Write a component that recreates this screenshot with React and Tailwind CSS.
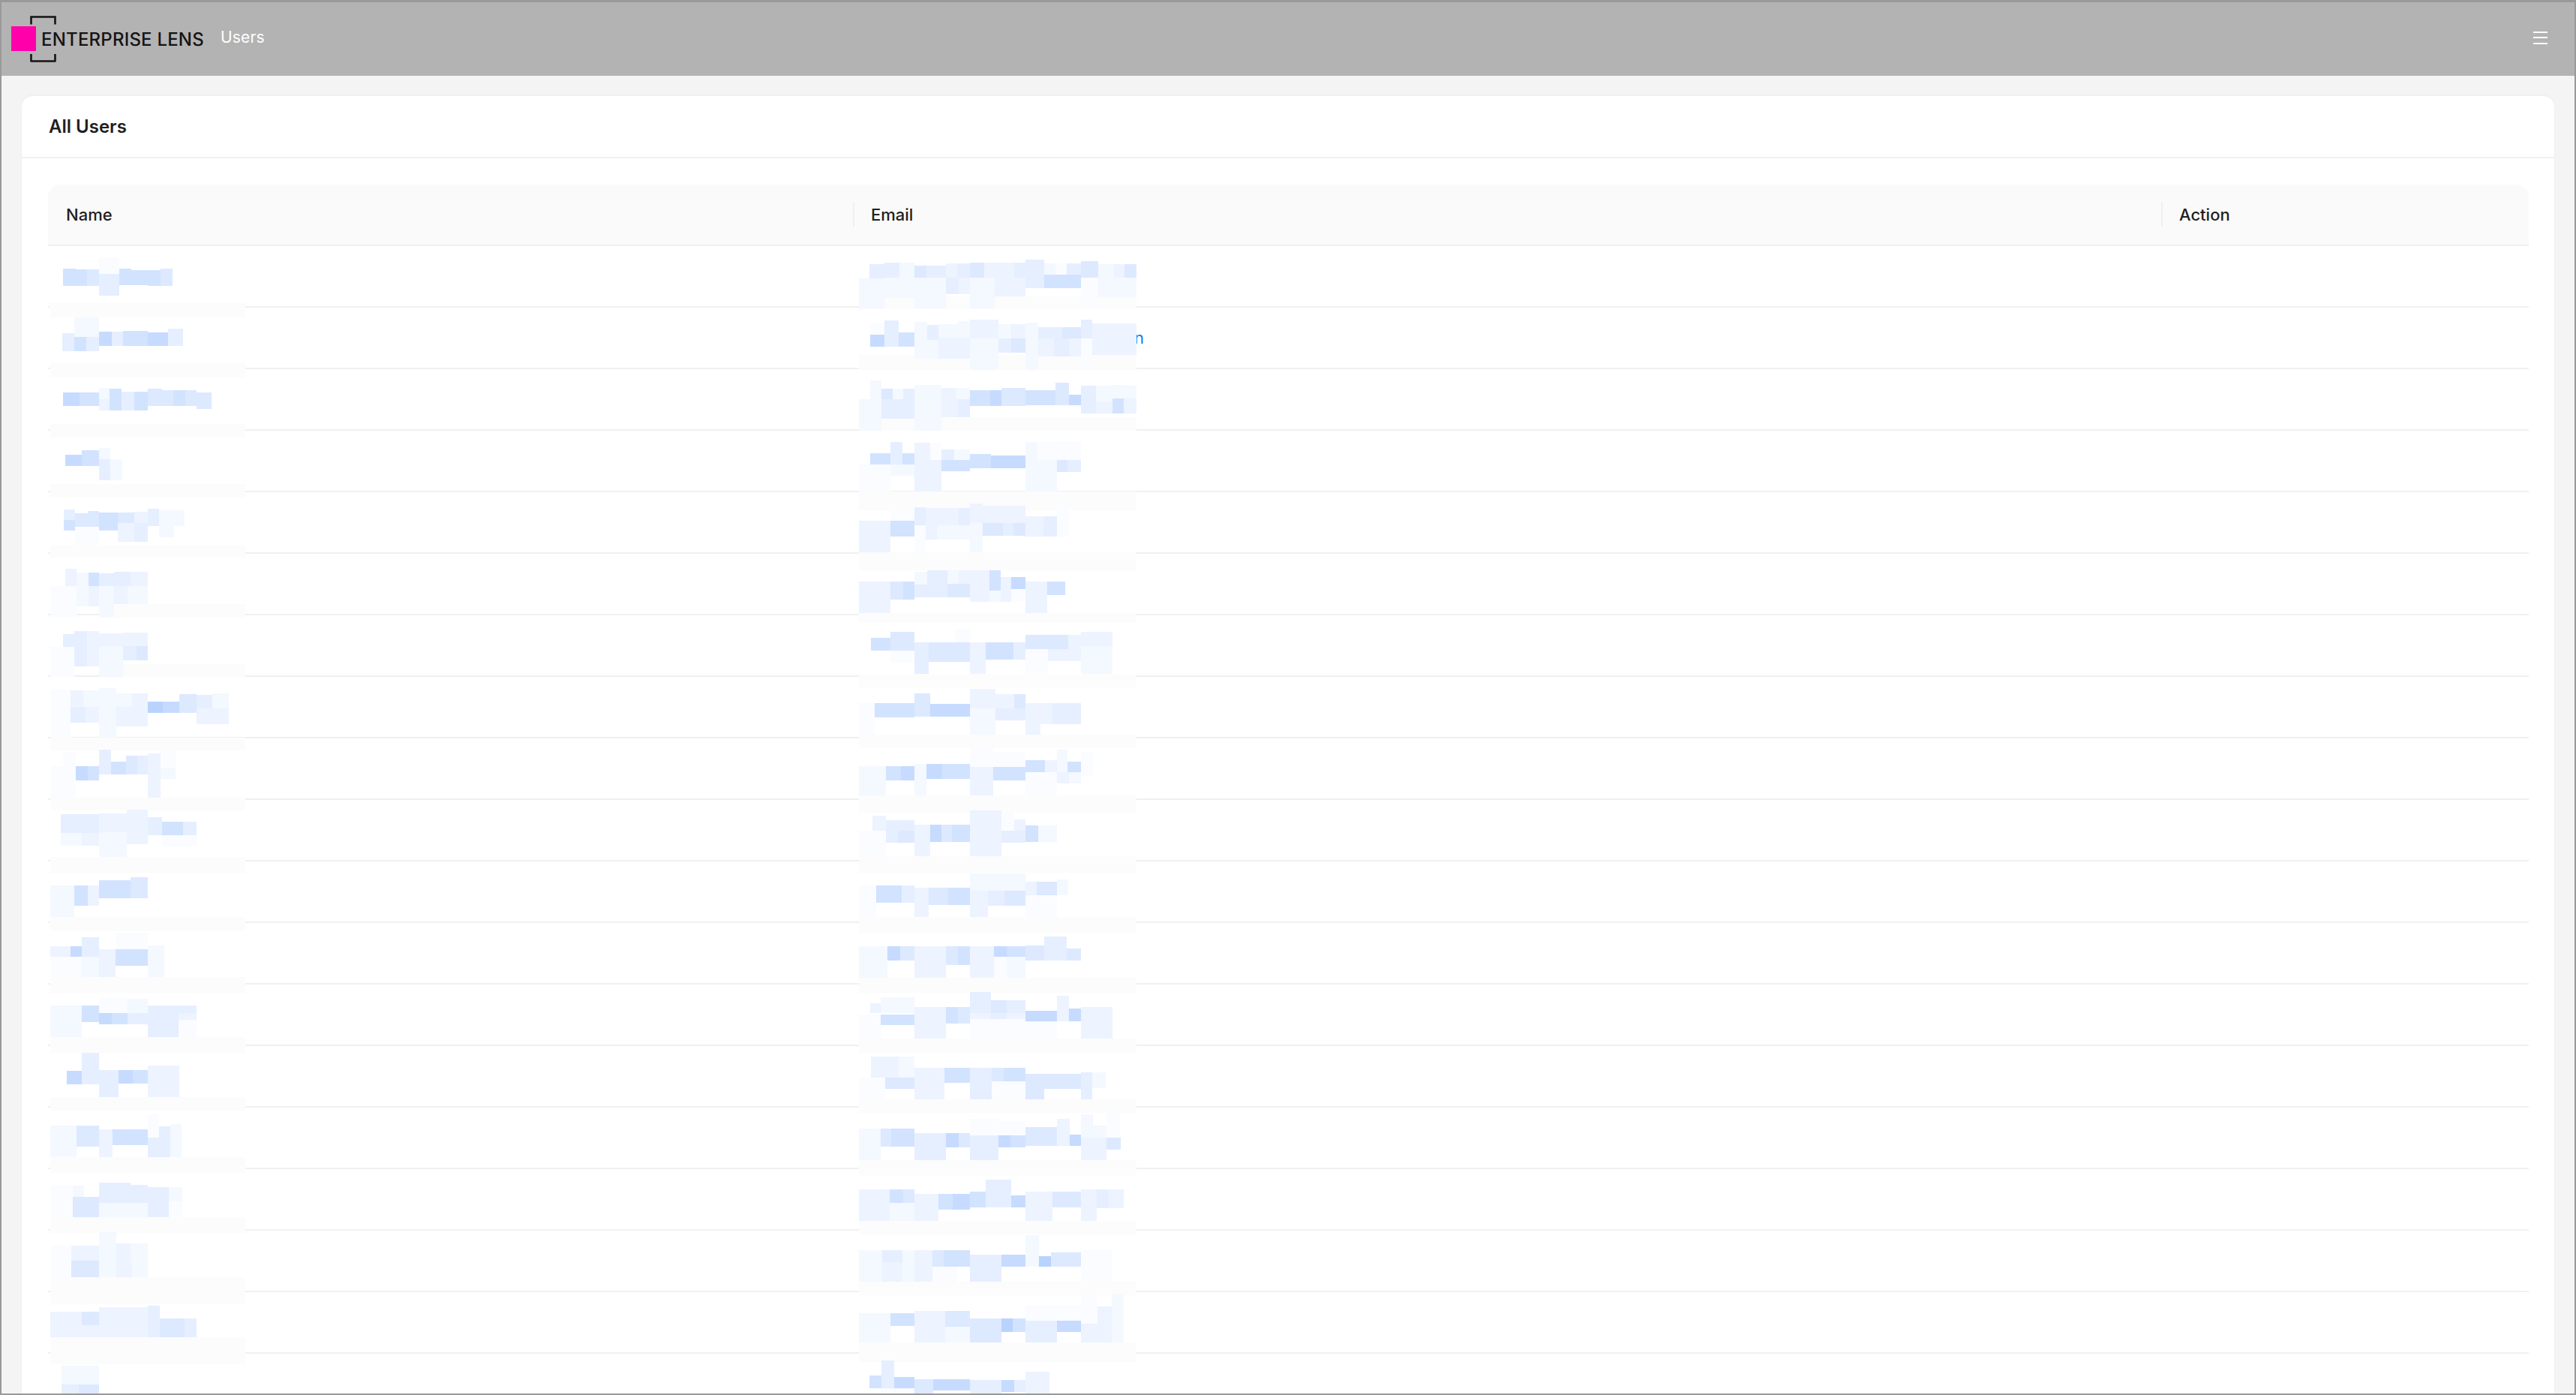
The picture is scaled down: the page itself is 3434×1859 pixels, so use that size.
const palette = {
  0: '#b9d3ff',
  1: '#c6dbff',
  2: '#d2e3ff',
  3: '#dde9ff',
  4: '#e6efff',
  5: '#edf3ff',
  6: '#f4f8ff',
  7: '#fafcff',
  v: '#fcfcfc',
};

// the redacted names and emails: x0 y0 x1 y1 shade, one crop of the column per entry
const nameMosaic = [
  {
    x: 40,
    y: 330,
    blocks: `81 222 861 280 v,81 460 861 520 v,81 705 861 760 v,81 945 861 1000 v,81 1190 861 1240 v,336 1425 861 1480 v,
      132 84 183 153 2,183 87 228 153 2,228 87 276 153 3,276 39 357 105 7,276 105 357 192 4,357 84 405 150 2,405 90 471 150 2,471 90 522 153 2,522 84 570 153 3,
      129 342 177 414 4,177 279 276 357 6,177 357 225 414 2,225 357 276 414 4,276 336 327 393 1,327 336 372 393 4,372 333 471 393 2,471 339 552 393 1,552 324 612 393 4,
      132 579 198 633 1,198 579 276 633 2,276 561 318 606 6,276 606 318 651 5,318 564 366 606 2,318 606 366 651 2,366 576 417 651 4,417 576 471 651 2,471 564 528 633 3,528 570 573 633 3,573 570 621 633 2,621 570 666 633 3,666 579 726 645 3,
      141 828 207 873 1,207 810 276 873 2,276 801 321 846 6,276 846 321 930 4,321 846 369 930 6,
      135 1047 180 1089 4,135 1089 180 1131 2,180 1062 231 1116 3,231 1053 276 1116 3,180 1116 276 1191 7,276 1059 351 1131 2,351 1059 417 1101 3,417 1056 471 1101 5,351 1101 417 1176 5,417 1101 471 1176 4,471 1044 516 1113 4,516 1050 618 1113 6,516 1113 576 1158 6,
      141 1284 186 1353 5,186 1299 234 1353 6,234 1299 276 1353 2,276 1302 336 1353 4,336 1296 402 1353 4,402 1296 471 1353 5,81 1353 186 1478 7,186 1353 234 1434 6,234 1353 276 1434 5,276 1353 336 1425 6,336 1353 390 1425 5,390 1353 471 1425 6,276 1425 336 1478 6`,
  },
  {
    x: 40,
    y: 830,
    blocks: `372 165 861 218 v,81 459 861 510 v,81 700 861 750 v,81 936 861 1000 v,81 1176 861 1232 v,81 1416 861 1480 v,
      132 45 177 96 4,177 33 228 96 4,228 33 276 96 5,276 42 327 93 5,327 42 372 93 5,372 39 471 93 5,81 96 177 218 7,177 96 228 174 4,228 96 276 174 5,276 93 372 218 6,372 93 426 150 4,426 93 471 150 3,
      81 267 162 335 7,162 270 213 335 5,213 270 276 335 6,276 261 345 459 6,345 282 408 336 6,408 282 471 336 5,345 336 471 414 5,162 336 222 399 4,222 336 276 399 5,81 335 162 459 7,471 315 531 360 0,531 315 597 360 1,597 285 666 360 3,666 288 729 345 4,729 282 795 342 6,666 342 795 405 5,
      133 516 183 573 7,81 573 183 699 7,183 573 231 630 1,231 573 276 630 2,276 507 324 606 4,324 555 384 606 2,384 531 429 606 3,429 531 471 606 4,471 522 522 579 5,471 579 522 699 5,522 507 585 579 7,522 579 582 624 6,
      123 765 276 840 4,123 840 207 891 6,207 840 276 891 5,276 762 387 837 5,387 747 471 837 5,387 837 471 885 5,276 837 387 936 6,471 777 528 849 4,528 795 612 849 2,612 795 666 849 4,528 849 666 894 7,
      81 1050 177 1176 6,177 1050 231 1131 2,231 1050 276 1131 5,276 1029 402 1101 2,402 1017 471 1101 3,
      207 1257 276 1335 4,81 1293 162 1335 5,162 1293 207 1335 1,81 1335 207 1416 7,207 1335 276 1416 6,276 1305 342 1416 5,342 1305 471 1371 2,471 1290 537 1416 6,342 1240 471 1305 7,
      81 1530 207 1560 6,207 1530 276 1560 2,276 1500 390 1560 7,390 1503 471 1560 6,471 1530 666 1560 4`,
  },
  {
    x: 40,
    y: 1350,
    blocks: `81 96 861 160 v,81 336 861 390 v,81 576 861 640 v,81 816 861 880 v,81 1056 861 1165 v,81 1296 861 1405 v,
      81 0 207 96 6,207 0 276 36 2,276 0 327 45 1,327 0 390 45 2,390 0 471 45 4,471 0 594 96 4,594 0 666 27 5,594 27 666 96 7,
      147 231 207 285 1,207 159 276 285 4,276 228 354 336 4,354 228 411 282 1,411 228 471 282 2,471 210 597 336 5,
      81 450 186 575 6,186 450 228 534 3,228 450 276 534 3,276 465 330 576 5,330 465 471 528 2,471 402 516 498 7,516 453 561 498 4,471 498 561 576 4,561 444 606 576 6,
      81 690 171 816 7,171 690 216 735 6,171 735 276 816 3,276 678 402 759 4,402 687 471 759 4,276 759 471 816 6,471 696 555 816 4,555 696 609 753 6,555 753 609 816 7,
      81 930 165 1056 7,165 930 276 990 5,165 990 219 1056 3,219 990 276 1056 3,276 876 345 1056 6,345 921 402 996 5,402 921 471 1002 6,345 996 408 1056 5,408 1002 471 1056 6,
      81 1194 207 1296 5,207 1194 276 1248 3,276 1176 471 1296 5,207 1248 276 1296 5,471 1170 519 1296 4,519 1221 618 1296 3,618 1221 666 1296 4,
      126 1410 276 1485 6,126 1485 195 1521 4,195 1485 276 1521 3`,
  },
];

const emailMosaic = [
  {
    x: 1130,
    y: 330,
    blocks: `45 195 1155 245 v,45 429 1155 489 v,45 680 1155 732 v,45 975 1155 1050 v,45 1218 1155 1290 v,45 1461 1155 1500 v,
      87 66 147 123 4,147 60 207 123 4,207 60 267 123 6,267 72 315 120 3,315 72 393 120 4,393 63 438 120 5,438 63 489 120 4,489 60 546 120 3,546 60 666 120 5,666 60 711 120 4,711 48 786 162 4,786 63 831 108 6,831 63 876 108 7,876 63 933 108 4,933 54 1002 120 3,1002 66 1065 120 6,1065 66 1107 120 5,1107 66 1155 120 3,45 123 147 245 6,147 120 267 200 6,267 120 393 245 6,393 120 444 186 4,444 120 489 186 5,489 120 588 245 6,588 120 711 195 5,786 108 933 162 2,933 120 1002 245 7,1002 120 1155 198 6,
      90 303 147 348 7,90 348 147 396 1,147 291 204 396 4,204 339 267 396 2,267 297 318 444 6,318 309 363 369 4,318 369 363 444 6,363 306 441 360 6,441 294 489 360 6,363 360 489 444 5,489 288 603 363 5,489 363 603 489 6,603 306 654 363 6,654 306 711 363 5,603 363 654 420 4,654 363 711 420 3,711 300 762 489 6,762 318 858 363 4,858 318 933 363 3,762 363 825 435 5,825 363 885 435 4,885 363 933 435 5,933 288 978 363 4,933 363 978 489 7,978 303 1155 363 5,978 363 1155 429 5,
      90 531 135 606 6,135 564 180 606 3,180 564 222 606 6,222 564 267 606 4,267 549 375 606 6,375 561 432 606 5,432 561 489 606 6,489 570 570 633 2,570 570 615 633 1,615 561 711 633 3,711 570 831 630 2,831 540 885 630 3,885 588 933 630 1,933 552 993 663 4,993 552 1059 615 6,1059 549 1104 603 6,1104 552 1155 603 6,1059 603 1104 663 2,1104 603 1155 663 5,993 615 1059 663 5,45 606 135 732 6,135 606 267 684 4,267 606 375 732 6,375 606 441 678 5,441 606 489 678 4,
      90 822 171 867 2,171 777 219 867 4,219 822 267 867 2,267 780 330 849 5,330 780 375 849 7,375 807 426 849 4,426 807 489 849 6,267 849 375 975 5,375 849 432 894 2,432 849 489 894 2,489 825 573 882 2,573 831 711 882 1,711 777 756 849 6,756 777 837 849 7,837 774 888 849 7,888 774 933 849 7,711 849 837 975 6,837 849 879 897 3,879 849 933 897 4,45 867 171 975 7,171 867 216 912 6,216 867 267 912 6,
      171 1050 219 1092 7,219 1050 267 1092 7,267 1038 312 1110 4,312 1041 381 1110 5,381 1041 444 1110 5,444 1041 489 1110 4,489 1023 540 1101 5,540 1032 651 1101 5,651 1032 711 1101 5,45 1092 171 1218 5,171 1092 222 1155 2,222 1092 267 1155 2,267 1110 312 1218 7,312 1110 357 1167 5,357 1110 489 1167 6,489 1101 540 1218 6,540 1101 621 1152 3,621 1101 663 1152 4,663 1101 711 1152 3,711 1074 783 1155 5,783 1074 837 1155 4,837 1026 885 1098 7,837 1098 885 1155 7,
      267 1296 318 1347 6,318 1290 399 1344 4,399 1290 444 1344 6,444 1290 489 1344 5,489 1290 567 1416 5,567 1290 612 1371 2,612 1317 654 1416 5,654 1317 711 1365 1,567 1371 612 1416 6,654 1365 711 1416 7,45 1335 171 1461 5,171 1335 222 1407 3,222 1335 267 1407 2,267 1347 318 1398 4,318 1344 399 1398 4,399 1344 444 1398 3,444 1344 489 1398 3,711 1335 798 1461 5,798 1335 870 1389 2`,
  },
  {
    x: 1130,
    y: 830,
    blocks: `45 205 1155 260 v,45 447 1155 500 v,45 690 1155 760 v,45 933 1155 1000 v,45 1176 1155 1240 v,45 1419 1155 1480 v,
      93 60 171 111 2,171 36 225 111 3,225 36 267 111 3,267 78 324 204 4,324 78 489 156 3,489 78 552 204 5,552 78 663 147 2,663 78 711 147 4,711 48 882 105 3,882 48 933 105 5,933 36 1059 93 5,933 93 1059 204 6,711 105 801 204 7,801 105 933 153 5,171 111 267 159 7,429 24 489 78 7,
      108 321 168 378 2,168 321 216 378 2,216 321 267 378 2,45 321 108 447 7,267 282 330 375 3,330 324 489 375 1,489 264 591 342 5,489 342 591 447 6,591 285 666 342 5,666 285 711 342 3,591 342 654 390 4,654 342 711 390 4,711 321 771 447 5,771 321 819 405 5,819 321 933 405 4,
      45 573 153 690 6,153 573 213 630 2,213 573 267 630 1,267 564 315 690 6,315 564 378 624 1,378 564 429 624 2,429 564 489 624 2,489 576 582 690 5,489 500 582 576 7,582 516 660 576 7,660 516 711 576 7,582 576 660 630 2,660 576 711 630 2,711 549 789 597 2,789 549 837 597 5,837 507 879 597 6,879 555 933 597 2,837 597 885 642 5,885 597 933 642 6,711 597 837 690 7,933 519 984 612 7,
      99 771 153 831 5,153 789 267 831 4,45 831 153 933 7,153 831 201 879 4,201 831 267 879 3,267 807 330 933 5,330 807 375 876 1,375 807 417 876 3,417 807 489 876 2,489 750 615 831 5,615 744 666 831 7,666 786 711 831 5,489 831 615 933 5,615 831 711 879 4,711 810 762 876 2,762 810 837 876 6,
      45 1050 114 1176 7,114 1050 216 1119 2,216 1050 267 1119 4,267 1059 324 1176 5,324 1059 402 1128 3,402 1059 489 1128 2,489 1002 711 1071 6,489 1071 561 1176 5,561 1071 627 1131 4,627 1071 711 1131 3,711 1035 756 1089 5,756 1035 837 1089 3,837 1026 882 1089 6,711 1089 837 1176 7,
      45 1293 159 1419 6,159 1293 210 1350 1,210 1293 267 1350 3,267 1293 393 1419 5,393 1293 441 1368 3,441 1293 489 1368 2,489 1293 585 1419 5,585 1293 636 1335 1,636 1293 711 1335 2,585 1335 636 1419 7,636 1335 711 1419 6,711 1290 786 1350 3,786 1254 876 1350 4,876 1302 933 1350 3,
      90 1521 132 1560 5,132 1497 267 1560 6,267 1536 393 1560 5,393 1536 441 1560 2,441 1536 489 1560 3,489 1476 573 1560 4,573 1509 636 1560 3,636 1509 711 1560 4,711 1551 837 1560 1,837 1491 885 1560 5,885 1542 933 1560 1,933 1536 1059 1560 5`,
  },
  {
    x: 1130,
    y: 1350,
    blocks: `45 102 1155 160 v,45 345 1155 400 v,45 588 1155 650 v,45 831 1155 885 v,45 1074 1155 1130 v,45 1317 1155 1395 v,
      45 6 132 102 7,132 6 267 48 2,267 0 393 102 5,393 0 441 42 2,441 0 489 42 3,489 24 711 102 7,489 0 573 24 5,573 0 636 24 4,636 0 711 24 5,711 0 837 33 1,837 0 885 33 5,885 0 933 33 1,933 0 1059 102 5,711 33 837 102 7,
      93 174 204 258 5,204 174 267 258 6,45 258 150 345 7,150 258 267 303 3,267 219 387 345 5,387 219 489 279 2,489 219 576 345 4,576 219 624 273 3,624 219 711 273 2,576 273 711 345 7,711 243 786 345 3,786 243 864 303 3,864 243 933 303 3,933 237 978 345 4,978 237 1032 300 6,
      45 462 132 588 6,132 462 174 534 3,174 462 267 534 2,267 480 393 588 4,393 480 444 537 1,444 480 489 537 3,489 489 603 588 4,603 489 651 537 1,651 489 711 537 2,711 456 777 531 3,777 456 837 531 3,837 423 888 531 5,888 486 933 531 1,933 498 1035 588 5,1035 498 1092 546 3,933 405 981 498 6,981 450 1035 498 6,1035 390 1089 498 7,489 423 603 489 7,603 432 711 489 7,
      45 705 168 831 5,168 705 222 759 2,222 705 267 759 3,168 759 267 831 6,267 723 363 831 5,363 723 420 786 2,420 723 489 786 1,489 714 552 777 2,552 666 654 777 4,654 729 711 777 1,711 714 819 831 5,819 714 933 777 3,933 705 996 831 5,996 705 1044 780 4,1044 705 1104 780 5,
      45 948 138 1074 6,138 948 219 996 4,138 996 219 1074 5,219 948 267 1074 6,267 948 339 1074 5,339 948 384 1014 3,384 948 438 1014 2,438 948 489 1014 2,339 1014 438 1074 7,489 966 615 1074 4,615 966 711 1014 1,711 888 765 1014 6,765 972 813 1014 0,813 957 933 1014 3,933 948 1059 1074 7,
      45 1200 171 1317 6,171 1200 267 1251 2,267 1191 390 1317 5,390 1191 489 1254 3,390 1254 489 1317 6,489 1221 615 1317 3,615 1221 660 1275 0,660 1221 711 1275 2,711 1230 837 1317 4,837 1230 933 1275 1,933 1242 1056 1317 5,999 1173 1056 1242 5,933 1125 999 1242 7,1056 1125 1104 1317 6,711 1167 933 1230 7,
      135 1389 186 1500 4,87 1449 135 1500 2,186 1455 267 1500 1,267 1464 342 1521 3,342 1464 489 1509 1,489 1467 615 1521 4,615 1467 666 1515 1,666 1467 711 1515 4,711 1434 807 1521 5,135 1500 267 1521 7`,
  },
];

const ROW_COUNT = 19;

function parseBlocks(text) {
  const blocks = text
    .split(',')
    .map((b) => b.trim().split(/\s+/))
    .map(([x0, y0, x1, y1, shade]) => ({ x0: +x0, y0: +y0, x1: +x1, y1: +y1, shade }));
  // veils go underneath
  return [...blocks.filter((b) => b.shade === 'v'), ...blocks.filter((b) => b.shade !== 'v')];
}

function Mosaic({ crops }) {
  return (
    <svg className="absolute left-0 top-0 w-[3307px] h-[1700px] pointer-events-none" viewBox="0 0 3307 1700">
      {crops.map((crop) => (
        <g key={crop.y} transform={`translate(${crop.x - 64} ${crop.y - 246}) scale(${1 / 3})`}>
          {parseBlocks(crop.blocks).map((b, i) => (
            <rect key={i} x={b.x0} y={b.y0} width={b.x1 - b.x0} height={b.y1 - b.y0} fill={palette[b.shade]} />
          ))}
        </g>
      ))}
    </svg>
  );
}

function Logo() {
  return (
    <svg className="w-[60px] h-[62px] shrink-0" viewBox="0 0 60 62" fill="none">
      <path d="M26.5 11.5V1.5H58.5V11.5" stroke="#141414" strokeWidth="2.6" />
      <path d="M26.5 51V60.5H58.5V51" stroke="#141414" strokeWidth="2.6" strokeLinejoin="round" />
      <rect x="0" y="14" width="33" height="33" fill="#ff00aa" />
    </svg>
  );
}

function HeaderCell({ children, divider, className = '' }) {
  return (
    <th className={`relative px-6 text-left text-[22px] font-medium text-[#1f1f1f] bg-[#fafafa] border-b-2 border-[#f0f0f0] ${className}`}>
      {divider && <span className="absolute left-0 top-[23px] h-[33px] w-[2px] bg-[#f0f0f0]" />}
      {children}
    </th>
  );
}

export default function App() {
  const rows = Array.from({ length: ROW_COUNT }, (_, i) => i);

  return (
    <div className="h-screen overflow-hidden flex flex-col border-t-[3px] border-x-2 border-b-2 border-[#999999] bg-[#f4f4f4] font-['Inter',sans-serif]">
      {/* Top bar */}
      <header className="h-[98px] shrink-0 bg-[#b3b3b3] flex items-center justify-between pl-[13px] pr-[36px]">
        <div className="flex items-center -mt-[1px]">
          <Logo />
          <span className="-ml-[20px] mt-[2px] text-[24px] font-medium tracking-[0.2px] text-[#141414] whitespace-nowrap">ENTERPRISE LENS</span>
          <span className="ml-[22px] -mt-[3px] text-[21px] tracking-[0.2px] text-white whitespace-nowrap">Users</span>
        </div>
        <button className="flex flex-col gap-[5.5px] w-[19px] -mt-[4px]">
          <span className="h-[2px] bg-white" />
          <span className="h-[2px] bg-white" />
          <span className="h-[2px] bg-white" />
        </button>
      </header>

      {/* Card */}
      <main className="flex-1 min-h-0 overflow-hidden px-[26px] pt-[25px]">
        <div className="bg-white rounded-t-[16px] border-x border-t-2 border-[#f0f0f0]">
          <div className="h-[83px] flex items-center px-[36px] border-b-2 border-[#f0f0f0]">
            <h1 className="text-[24px] font-semibold text-[#1f1f1f]">All Users</h1>
          </div>

          <div className="relative mx-[35px] mt-[35px]">
            <table className="w-[3307px] table-fixed border-separate border-spacing-0">
              <colgroup>
                <col className="w-[1073px]" />
                <col className="w-[1744px]" />
                <col className="w-[490px]" />
              </colgroup>
              <thead>
                <tr className="h-[82px]">
                  <HeaderCell className="rounded-tl-[16px]">Name</HeaderCell>
                  <HeaderCell divider>Email</HeaderCell>
                  <HeaderCell divider className="rounded-tr-[16px]">Action</HeaderCell>
                </tr>
              </thead>
              <tbody>
                {rows.map((i) => (
                  <tr key={i} className="h-[82px]">
                    <td className="border-b-2 border-[#f0f0f0]" />
                    <td className="border-b-2 border-[#f0f0f0] text-[22px] text-[#1677ff]">
                      {i === 1 && <span className="ml-[375px]">n</span>}
                    </td>
                    <td className="border-b-2 border-[#f0f0f0]" />
                  </tr>
                ))}
              </tbody>
            </table>
            <Mosaic crops={nameMosaic} />
            <Mosaic crops={emailMosaic} />
          </div>
        </div>
      </main>
    </div>
  );
}
